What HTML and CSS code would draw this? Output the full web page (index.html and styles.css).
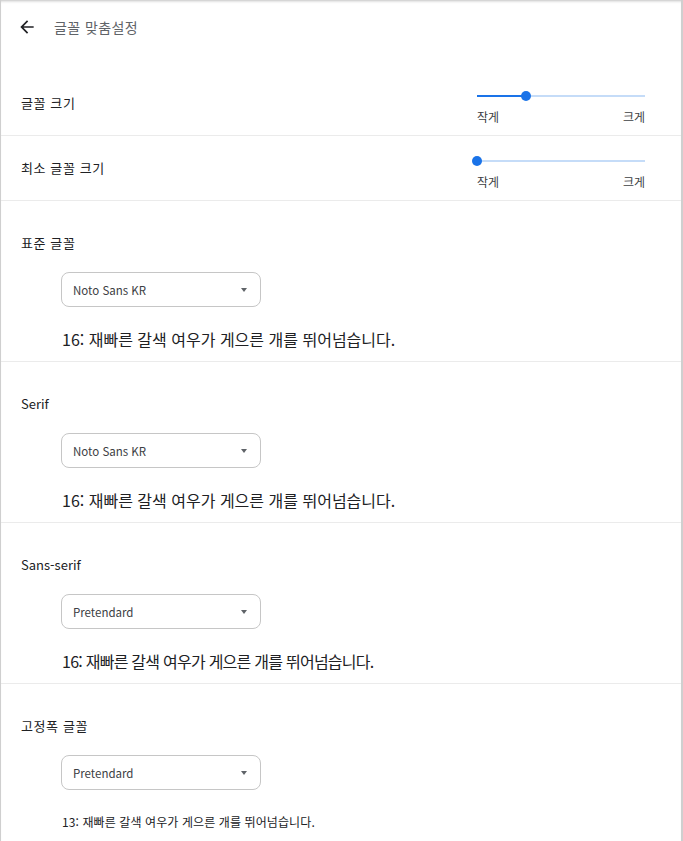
FILE: index.html
```html
<!DOCTYPE html>
<html lang="ko">
<head>
<meta charset="utf-8">
<title>글꼴 맞춤설정</title>
<link rel="stylesheet" href="styles.css">
</head>
<body>
<div class="page">
  <header class="header">
    <button class="back" aria-label="뒤로">
      <svg viewBox="0 0 24 24" width="20" height="20"><path d="M20 11H7.83l5.59-5.59L12 4l-8 8 8 8 1.41-1.41L7.83 13H20v-2z" fill="#202124"/></svg>
    </button>
    <h1 class="title">글꼴 맞춤설정</h1>
  </header>

  <div class="list">
    <div class="row">
      <span class="label ko">글꼴 크기</span>
      <div class="slider">
        <div class="track">
          <div class="fill" style="width: 49px"></div>
          <div class="knob" style="left: 49px"></div>
        </div>
        <div class="ends"><span>작게</span><span>크게</span></div>
      </div>
    </div>
    <div class="row">
      <span class="label ko">최소 글꼴 크기</span>
      <div class="slider">
        <div class="track">
          <div class="fill" style="width: 0px"></div>
          <div class="knob" style="left: 0px"></div>
        </div>
        <div class="ends"><span>작게</span><span>크게</span></div>
      </div>
    </div>

    <section class="font-section">
      <div class="label ko">표준 글꼴</div>
      <div class="select"><span>Noto Sans KR</span><span class="caret"></span></div>
      <p class="sample">16: 재빠른 갈색 여우가 게으른 개를 뛰어넘습니다.</p>
    </section>
    <section class="font-section">
      <div class="label">Serif</div>
      <div class="select"><span>Noto Sans KR</span><span class="caret"></span></div>
      <p class="sample">16: 재빠른 갈색 여우가 게으른 개를 뛰어넘습니다.</p>
    </section>
    <section class="font-section">
      <div class="label">Sans-serif</div>
      <div class="select"><span>Pretendard</span><span class="caret"></span></div>
      <p class="sample sample-sans">16: 재빠른 갈색 여우가 게으른 개를 뛰어넘습니다.</p>
    </section>
    <section class="font-section last">
      <div class="label ko">고정폭 글꼴</div>
      <div class="select"><span>Pretendard</span><span class="caret"></span></div>
      <p class="sample sample-small">13: 재빠른 갈색 여우가 게으른 개를 뛰어넘습니다.</p>
    </section>
  </div>
</div>
</body>
</html>
```
FILE: styles.css
```css
html, body {
  margin: 0;
  padding: 0;
  background: #ffffff;
}
body {
  font-family: "Noto Sans CJK KR", "Noto Sans", sans-serif;
  color: #202124;
}
.page {
  box-sizing: border-box;
  min-height: 100vh;
  border-left: 1px solid #cfcfcf;
  border-right: 2px solid #cfcfcf;
  box-shadow: inset 0 3px 3px -2px rgba(0,0,0,0.25);
  overflow: hidden;
}
.header {
  height: 54px;
  display: flex;
  align-items: center;
  padding-left: 16px;
}
.back {
  border: 0;
  background: none;
  padding: 0;
  margin: 0;
  width: 20px;
  height: 20px;
  display: flex;
}
.title {
  margin: 0 0 0 17px;
  font-size: 14px;
  font-weight: 400;
  color: #5f6368;
  line-height: 20px;
  letter-spacing: 0.4px;
}
.list {
  padding-top: 17px;
}
.row {
  height: 65px;
  display: flex;
  align-items: center;
  justify-content: space-between;
  padding: 0 36px 0 20px;
  border-bottom: 1px solid #ebebeb;
  box-sizing: border-box;
}
.label {
  font-size: 13px;
  line-height: 20px;
  color: #202124;
}
.label.ko {
  letter-spacing: 0.6px;
}
.slider {
  width: 168px;
  padding-top: 8px;
  display: flex;
  flex-direction: column;
  gap: 7px;
}
.track {
  position: relative;
  height: 12px;
}
.track::before {
  content: "";
  position: absolute;
  left: 0;
  right: 0;
  top: 5px;
  height: 2px;
  background: #c5dcf8;
}
.fill {
  position: absolute;
  left: 0;
  top: 5px;
  height: 2px;
  background: #1a73e8;
}
.knob {
  position: absolute;
  top: 1px;
  width: 10px;
  height: 10px;
  margin-left: -5px;
  border-radius: 50%;
  background: #1a73e8;
}
.ends {
  display: flex;
  justify-content: space-between;
  font-size: 12px;
  line-height: 16px;
  color: #3c4043;
}
.font-section {
  padding: 32px 20px 10px 20px;
  border-bottom: 1px solid #ebebeb;
  display: flex;
  flex-direction: column;
  align-items: flex-start;
}
.font-section.last {
  border-bottom: 0;
}
.select {
  box-sizing: border-box;
  margin: 19px 0 0 40px;
  width: 200px;
  height: 35px;
  border: 1px solid #c6c6c6;
  border-radius: 8px;
  display: flex;
  align-items: center;
  justify-content: space-between;
  padding: 0 13px 0 11px;
  font-size: 11.5px;
  color: #3c4043;
}
.caret {
  width: 0;
  height: 0;
  border-left: 3.5px solid transparent;
  border-right: 3.5px solid transparent;
  border-top: 4px solid #5f6368;
}
.sample {
  margin: 20px 0 0 41px;
  font-size: 16px;
  line-height: 24px;
  color: #202124;
}
.sample-sans {
  letter-spacing: -0.75px;
}
.sample-small {
  font-size: 12px;
  letter-spacing: 0.1px;
}
```
